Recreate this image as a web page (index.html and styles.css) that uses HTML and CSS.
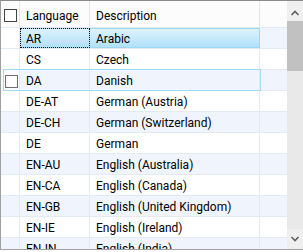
FILE: index.html
```html
<!DOCTYPE html>
<html>
<head>
<meta charset="utf-8">
<link rel="stylesheet" href="styles.css">
</head>
<body>
<div class="frame">
  <div class="table">
    <div class="row head">
      <div class="cell chk"><span class="box head-box"></span></div>
      <div class="cell lang">Language</div>
      <div class="cell desc">Description</div>
      <div class="cell extra"></div>
    </div>
    <div class="row alt selected">
      <div class="cell chk"></div>
      <div class="cell lang focus">AR</div>
      <div class="cell desc">Arabic</div>
      <div class="cell extra"></div>
    </div>
    <div class="row">
      <div class="cell chk"></div>
      <div class="cell lang">CS</div>
      <div class="cell desc">Czech</div>
      <div class="cell extra"></div>
    </div>
    <div class="row alt hover">
      <div class="cell chk"><span class="box row-box"></span></div>
      <div class="cell lang">DA</div>
      <div class="cell desc">Danish</div>
      <div class="cell extra"></div>
    </div>
    <div class="row">
      <div class="cell chk"></div>
      <div class="cell lang">DE-AT</div>
      <div class="cell desc">German (Austria)</div>
      <div class="cell extra"></div>
    </div>
    <div class="row alt">
      <div class="cell chk"></div>
      <div class="cell lang">DE-CH</div>
      <div class="cell desc">German (Switzerland)</div>
      <div class="cell extra"></div>
    </div>
    <div class="row">
      <div class="cell chk"></div>
      <div class="cell lang">DE</div>
      <div class="cell desc">German</div>
      <div class="cell extra"></div>
    </div>
    <div class="row alt">
      <div class="cell chk"></div>
      <div class="cell lang">EN-AU</div>
      <div class="cell desc">English (Australia)</div>
      <div class="cell extra"></div>
    </div>
    <div class="row">
      <div class="cell chk"></div>
      <div class="cell lang">EN-CA</div>
      <div class="cell desc">English (Canada)</div>
      <div class="cell extra"></div>
    </div>
    <div class="row alt">
      <div class="cell chk"></div>
      <div class="cell lang">EN-GB</div>
      <div class="cell desc">English (United Kingdom)</div>
      <div class="cell extra"></div>
    </div>
    <div class="row">
      <div class="cell chk"></div>
      <div class="cell lang">EN-IE</div>
      <div class="cell desc">English (Ireland)</div>
      <div class="cell extra"></div>
    </div>
    <div class="row alt">
      <div class="cell chk"></div>
      <div class="cell lang">EN-IN</div>
      <div class="cell desc">English (India)</div>
      <div class="cell extra"></div>
    </div>
  </div>
  <div class="scrollbar">
    <div class="sb-btn">
      <svg width="16" height="20" viewBox="0 0 16 20"><polyline points="4.5,14 8,10.5 11.5,14" fill="none" stroke="#606060" stroke-width="1.6"/></svg>
    </div>
    <div class="thumb"></div>
    <div class="track"></div>
    <div class="sb-btn">
      <svg width="16" height="20" viewBox="0 0 16 20"><polyline points="4.5,8 8,11.5 11.5,8" fill="none" stroke="#606060" stroke-width="1.6"/></svg>
    </div>
  </div>
</div>
</body>
</html>
```

FILE: styles.css
```css
html, body {
  margin: 0;
  padding: 0;
  background: #ffffff;
}

.frame {
  width: 303px;
  height: 250px;
  box-sizing: border-box;
  border-top: 1px solid #8a8a8a;
  border-left: 1px solid #a0a0a0;
  border-bottom: 1px solid #a0a0a0;
  display: flex;
  overflow: hidden;
  font-family: Roboto, "Noto Sans", sans-serif;
  font-size: 12px;
  color: #000;
}

.table {
  width: 286px;
  flex: none;
  overflow: hidden;
  background: #fff;
}

.row {
  display: grid;
  grid-template-columns: 19px 70px 170px 27px;
  height: 21px;
  box-sizing: border-box;
  border-bottom: 1px solid #e2eaf4;
  position: relative;
}

.row.alt {
  background: #f0f5fd;
}

.row.head {
  height: 27px;
  background: #fcfcfc;
  border-bottom: 1px solid #e2eaf4;
}

.cell {
  box-sizing: border-box;
  border-right: 1px solid #e2eaf4;
  display: flex;
  align-items: center;
  padding-left: 6px;
  padding-top: 1px;
  white-space: nowrap;
  overflow: hidden;
}

.row.head .cell {
  border-right-color: #e5e5e5;
  padding-top: 3px;
}

.cell.chk,
.row.head .cell.chk {
  padding-left: 3px;
  padding-top: 0;
}

.cell.extra {
  border-right: none;
}

.box {
  display: block;
  width: 13px;
  height: 13px;
  box-sizing: border-box;
  background: #fff;
}

.head-box {
  border: 1px solid #444;
  margin-top: 3px;
}

.row-box {
  border: 1px solid #707070;
  margin-left: 1px;
  margin-top: 2px;
}

.row.selected .cell.chk {
  background: #fff;
}

.row.selected .cell.lang,
.row.selected .cell.desc {
  background: linear-gradient(#dff2fc, #b1e1f9);
  border: 1px solid #99d7f7;
  border-right-color: #99d7f7;
  padding-left: 5px;
}

.row.selected .cell.desc {
  border-left: none;
  padding-left: 6px;
}

.cell.focus {
  outline: 1px dotted #000;
  outline-offset: -1px;
}

.row.hover .cell.chk {
  background: #fafcff;
}

.row.hover::after {
  content: "";
  position: absolute;
  left: 2px;
  top: -1px;
  width: 258px;
  height: 22px;
  box-sizing: border-box;
  border: 1px solid #a6dbf6;
  pointer-events: none;
}

.scrollbar {
  width: 16px;
  flex: none;
  display: flex;
  flex-direction: column;
  background: #e9e9e9;
}

.sb-btn {
  height: 20px;
  flex: none;
  background: #efefef;
}

.sb-btn svg {
  display: block;
}

.thumb {
  height: 50px;
  flex: none;
  background: #c1c1c1;
}

.track {
  flex: 1;
}
```
